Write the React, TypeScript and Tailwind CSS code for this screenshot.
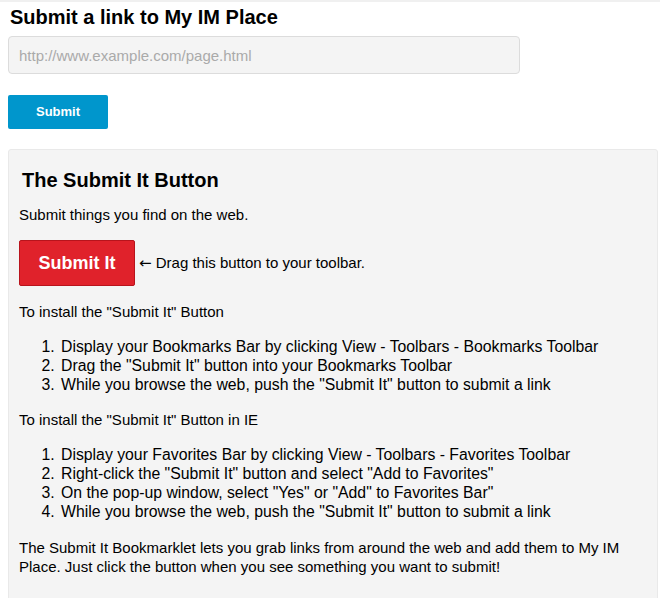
const firefoxSteps = [
  "Display your Bookmarks Bar by clicking View - Toolbars - Bookmarks Toolbar",
  'Drag the "Submit It" button into your Bookmarks Toolbar',
  'While you browse the web, push the "Submit It" button to submit a link',
];

const ieSteps = [
  "Display your Favorites Bar by clicking View - Toolbars - Favorites Toolbar",
  'Right-click the "Submit It" button and select "Add to Favorites"',
  'On the pop-up window, select "Yes" or "Add" to Favorites Bar"',
  'While you browse the web, push the "Submit It" button to submit a link',
];

export default function App() {
  return (
    <div className="min-h-[598px] bg-white border-t-2 border-[#f0f0f0] font-['Liberation_Sans',Arial,sans-serif] text-[15px] text-black">
      <div className="pl-2 pr-[2px]">
        <h1 className="ml-[2px] mt-[4px] text-[20px] font-bold leading-[22px]">
          Submit a link to My IM Place
        </h1>
        <input
          type="text"
          placeholder="http://www.example.com/page.html"
          className="mt-[8px] block h-[38px] w-[512px] rounded-[4px] border border-[#dcdcdc] bg-[#f4f4f4] px-[10px] text-[15px] placeholder:text-[#aaaaaa] outline-none"
        />
        <button className="mt-[21px] block h-[34px] w-[100px] rounded-[2px] bg-[#0096cc] text-[13px] font-bold text-white">
          Submit
        </button>

        <div className="mt-[20px] rounded-[3px] border border-[#e9e9e9] bg-[#f4f4f4] px-[10px] pt-[19px] pb-[28px]">
          <h2 className="ml-[3px] text-[20px] font-bold leading-[22px]">
            The Submit It Button
          </h2>
          <p className="mt-[15px] leading-[18px]">
            Submit things you find on the web.
          </p>
          <div className="mt-[16px] flex items-center">
            <a className="flex h-[46px] w-[116px] items-center justify-center rounded-[2px] border border-[#b8141c] bg-[#e0222b] text-[18px] font-bold text-white">
              Submit It
            </a>
            <span className="ml-[4px]">
              <span className="font-['DejaVu_Sans',sans-serif]">←</span> Drag
              this button to your toolbar.
            </span>
          </div>
          <p className="mt-[16px] leading-[19px]">To install the "Submit It" Button</p>
          <ol className="mt-[16px] list-decimal pl-[40px] text-[15.8px] leading-[19px]">
            {firefoxSteps.map((s) => (
              <li key={s} className="pl-[2px]">{s}</li>
            ))}
          </ol>
          <p className="mt-[16px] leading-[19px]">
            To install the "Submit It" Button in IE
          </p>
          <ol className="mt-[16px] list-decimal pl-[40px] text-[15.8px] leading-[19px]">
            {ieSteps.map((s) => (
              <li key={s} className="pl-[2px]">{s}</li>
            ))}
          </ol>
          <p className="mt-[17px] leading-[19px]">
            The Submit It Bookmarklet lets you grab links from around the web and
            add them to My IM Place. Just click the button when you see something
            you want to submit!
          </p>
        </div>
      </div>
    </div>
  );
}
